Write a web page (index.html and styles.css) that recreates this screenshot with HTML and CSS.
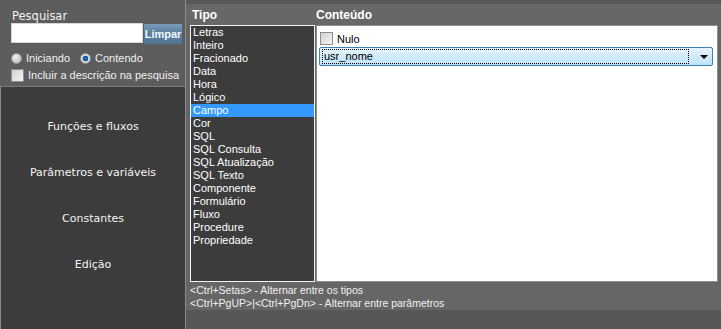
FILE: index.html
```html
<!DOCTYPE html>
<html>
<head>
<meta charset="utf-8">
<title>Parâmetros</title>
<link rel="stylesheet" href="styles.css">
</head>
<body>
<div class="app">
  <div class="side">
    <div class="search">
      <div class="search-title">Pesquisar</div>
      <div class="search-row">
        <input class="search-input" type="text">
        <button type="button" class="btn-clear">Limpar</button>
      </div>
      <div class="radio-row">
        <span class="radio"></span><span class="opt">Iniciando</span>
        <span class="radio checked"></span><span class="opt">Contendo</span>
      </div>
      <div class="check-row">
        <span class="check"></span><span class="opt">Incluir a descrição na pesquisa</span>
      </div>
    </div>
    <div class="menu">
      <div class="menu-item">Funções e fluxos</div>
      <div class="menu-item">Parâmetros e variáveis</div>
      <div class="menu-item">Constantes</div>
      <div class="menu-item">Edição</div>
    </div>
  </div>
  <div class="main">
    <div class="heads">
      <div class="head-type">Tipo</div>
      <div class="head-content">Conteúdo</div>
    </div>
    <div class="panes">
      <ul class="types">
        <li>Letras</li>
        <li>Inteiro</li>
        <li>Fracionado</li>
        <li>Data</li>
        <li>Hora</li>
        <li>Lógico</li>
        <li class="selected">Campo</li>
        <li>Cor</li>
        <li>SQL</li>
        <li>SQL Consulta</li>
        <li>SQL Atualização</li>
        <li>SQL Texto</li>
        <li>Componente</li>
        <li>Formulário</li>
        <li>Fluxo</li>
        <li>Procedure</li>
        <li>Propriedade</li>
      </ul>
      <div class="content">
        <div class="null-row"><span class="check"></span><span>Nulo</span></div>
        <div class="combo">
          <div class="combo-value">usr_nome</div>
          <div class="combo-arrow"></div>
        </div>
      </div>
    </div>
    <div class="help">
      <div>&lt;Ctrl+Setas&gt; - Alternar entre os tipos</div>
      <div>&lt;Ctrl+PgUP&gt;|&lt;Ctrl+PgDn&gt; - Alternar entre parâmetros</div>
    </div>
    <div class="foot"></div>
  </div>
</div>
</body>
</html>
```

FILE: styles.css
```css
html, body { margin: 0; padding: 0; }
body { width: 721px; height: 329px; overflow: hidden; background: #666666; font-family: "Liberation Sans", Arial, sans-serif; font-size: 11px; color: #ffffff; }

.app { display: flex; height: 329px; }

/* left column */
.side { width: 185px; border-right: 1px solid #8c8c8c; display: flex; flex-direction: column; }
.search { height: 86px; background: #5d5d5d; padding: 0 0 0 11px; box-sizing: border-box; }
.search-title { font-family: "DejaVu Sans", Verdana, sans-serif; font-size: 11.5px; color: #f2f2f2; padding: 9px 0 0 1px; height: 14px; }
.search-row { display: flex; align-items: flex-start; margin-top: 0; }
.search-input { width: 132px; height: 20px; box-sizing: border-box; border: 1px solid #d8d8d8; background: #ffffff; margin: 0; padding: 0; outline: none; }
.btn-clear { width: 38px; height: 20px; margin: 1px 0 0 1px; padding: 0; border: 0; background: linear-gradient(#7b9bbb, #5b7fa2 45%, #4f7597); color: #f4f8fc; font-family: "Liberation Sans", Arial, sans-serif; font-size: 11px; font-weight: bold; }

.radio-row, .check-row { display: flex; align-items: center; color: #f0f0f0; }
.radio-row { height: 14px; margin-top: 7px; }
.check-row { height: 14px; margin-top: 3px; }
.opt { margin-left: 4px; }
.radio-row .opt:nth-of-type(2) { margin-right: 10px; }
.radio { width: 11px; height: 11px; border-radius: 50%; border: 1px solid #9a9a9a; background: radial-gradient(circle at 40% 35%, #f2f2f2, #c4c4c4 70%); box-sizing: border-box; }
.radio.checked { background: radial-gradient(circle at 50% 50%, #2b79c4 0, #0e4f96 2.5px, #e8e8e8 3.2px, #cfcfcf 70%); }
.radio-row .opt { margin-right: 10px; }
.radio-row .opt:last-child { margin-right: 0; }
.check { width: 13px; height: 13px; box-sizing: border-box; border: 1px solid #8e8e8e; background: linear-gradient(135deg, #d0d0d0, #f5f5f5); flex: none; }

.menu { flex: 1; background: #3c3c3c; border-top: 1px solid #7a7a7a; border-left: 1px solid #8a8a8a; padding-top: 16px; font-family: "DejaVu Sans", Verdana, sans-serif; font-size: 11px; color: #f4f4f4; }
.menu-item { height: 46px; display: flex; align-items: center; justify-content: center; }

/* right column */
.main { flex: 1; display: flex; flex-direction: column; border-top: 4px solid #585858; }
.heads { height: 21px; display: flex; align-items: center; padding-left: 6px; background: #676767; font-size: 12px; font-weight: bold; color: #ffffff; }
.head-type { width: 124px; }

.panes { height: 257px; display: flex; padding-left: 4px; background: #666666; }
.types { width: 125px; box-sizing: border-box; margin: 0; padding: 0; list-style: none; border: 1px solid #f2f2f2; background: #3c3c3c; color: #ffffff; }
.types li { height: 13px; line-height: 13px; padding-left: 2px; }
.types li.selected { background: #3399ff; }

.content { width: 402px; box-sizing: border-box; margin-left: 1px; border: 1px solid #8e8e8e; background: #ffffff; padding: 6px 4px 0 2px; color: #000000; }
.null-row { display: flex; align-items: center; height: 13px; margin-left: 1px; }
.null-row span:last-child { margin-left: 4px; }
.combo { display: flex; align-items: center; height: 19px; margin-top: 2px; box-sizing: border-box; border: 1px solid #3c7fb1; border-radius: 2px; background: linear-gradient(#e6f4fd, #d2ebfb 50%, #bde3f9); }
.combo-value { flex: 1; height: 13px; line-height: 13px; margin: 0 11px 0 2px; padding-left: 1px; border: 1px dotted #000000; }
.combo-arrow { width: 0; height: 0; margin-right: 4px; border-left: 4px solid transparent; border-right: 4px solid transparent; border-top: 4px solid #000000; }

.help { height: 28px; box-sizing: border-box; padding: 2px 0 0 4px; font-size: 10.5px; line-height: 13px; color: #f0f0f0; background: #666666; }
.foot { flex: 1; background: #575757; }
```
